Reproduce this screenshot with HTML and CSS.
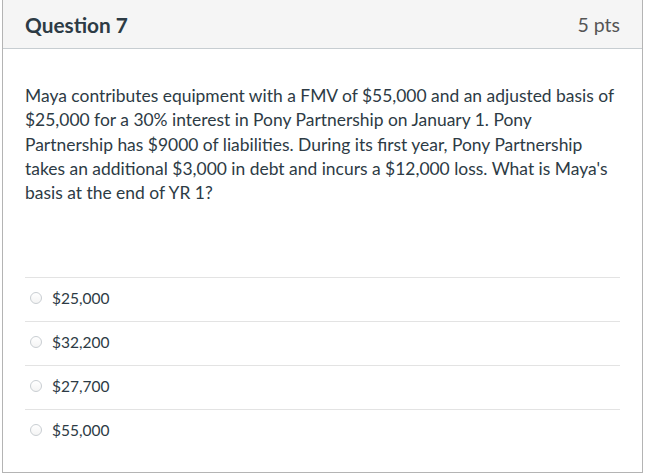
FILE: index.html
```html
<!DOCTYPE html>
<html>
<head>
<meta charset="utf-8">
<link rel="stylesheet" href="styles.css">
</head>
<body>
<div class="question">
  <div class="header">
    <h2 class="title">Question 7</h2>
    <span class="pts">5 pts</span>
  </div>
  <div class="body">
    <p class="text">Maya contributes equipment with a FMV of $55,000 and an adjusted basis of $25,000 for a 30% interest in Pony Partnership on January 1. Pony Partnership has $9000 of liabilities. During its first year, Pony Partnership takes an additional $3,000 in debt and incurs a $12,000 loss. What is Maya's basis at the end of YR 1?</p>
    <div class="answers">
      <label class="answer"><span class="radio"></span><span class="label">$25,000</span></label>
      <label class="answer"><span class="radio"></span><span class="label">$32,200</span></label>
      <label class="answer"><span class="radio"></span><span class="label">$27,700</span></label>
      <label class="answer"><span class="radio"></span><span class="label">$55,000</span></label>
    </div>
  </div>
</div>
</body>
</html>
```

FILE: styles.css
```css
html, body {
  margin: 0;
  padding: 0;
  background: #ffffff;
}
body {
  font-family: Lato, "Open Sans", sans-serif;
  color: #2d3b45;
}
.question {
  margin-left: 2px;
  width: 639px;
  height: 472px;
  border: 1px solid #b4b4b4;
  border-top: none;
  background: #fff;
}
.header {
  height: 48px;
  background: #f5f5f5;
  border-bottom: 1px solid #c7cdd1;
  display: flex;
  align-items: center;
  justify-content: space-between;
  padding: 0 22px 0 22px;
}
.title {
  margin: 0;
  font-size: 20.8px;
  font-weight: 700;
  color: #2d3b45;
}
.pts {
  font-size: 19.5px;
  color: #555;
}
.body {
  padding: 35px 22px 0 22px;
}
.text {
  margin: 0;
  font-size: 17.45px;
  line-height: 24.3px;
  height: 193px;
}
.answers {
  display: flex;
  flex-direction: column;
}
.answer {
  box-sizing: border-box;
  display: flex;
  align-items: center;
  height: 44px;
  border-top: 1px solid #e3e3e3;
  padding: 0 0 3px 5px;
}
.radio {
  width: 10px;
  height: 10px;
  border: 1px solid #c9ced2;
  border-radius: 50%;
  background: linear-gradient(#ffffff, #f4f4f4);
  margin-right: 10px;
}
.label {
  font-size: 15.5px;
}
```
